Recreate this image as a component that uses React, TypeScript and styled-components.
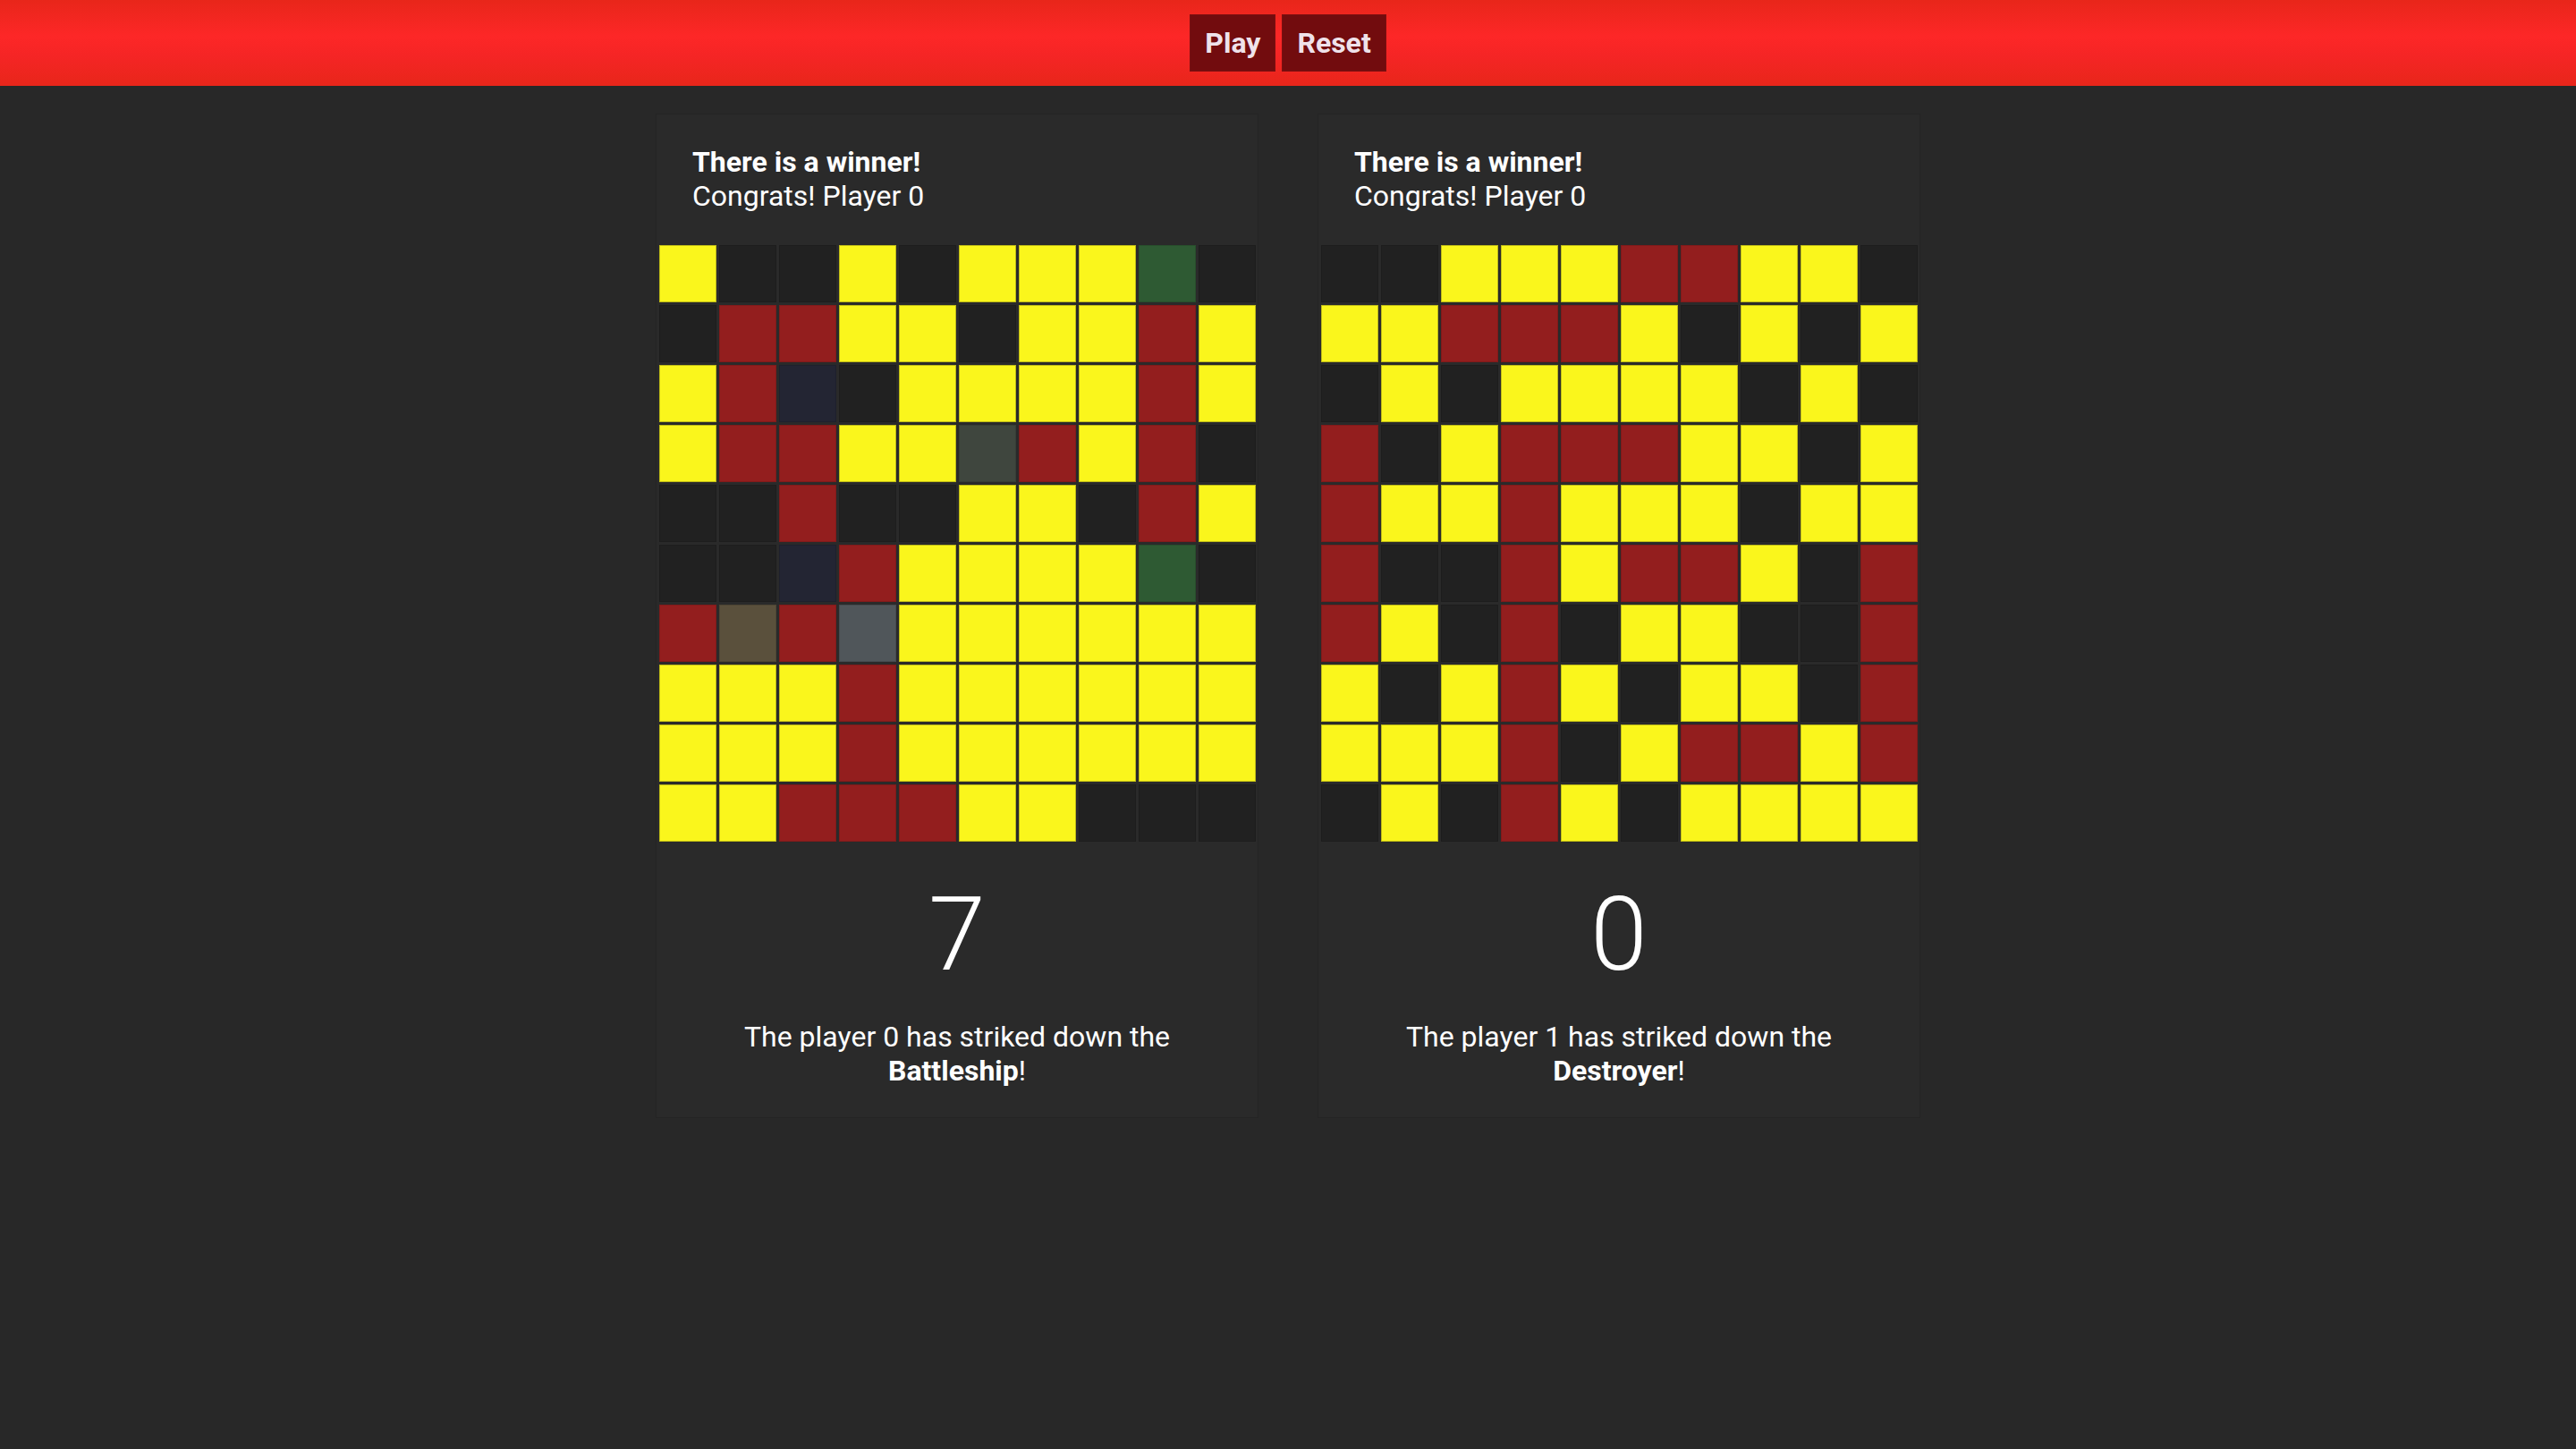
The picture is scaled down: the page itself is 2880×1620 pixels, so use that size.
import styled, { createGlobalStyle } from "styled-components";

const GlobalStyle = createGlobalStyle`
  html, body {
    margin: 0;
    padding: 0;
    background: #282828;
    min-height: 100%;
  }
  body {
    font-family: Roboto, "Liberation Sans", sans-serif;
    color: #ffffff;
  }
`;

// Y yellow (missed shot), K empty, R hit, G/N/O/B/S ship hulls of different types
const palette: Record<string, string> = {
  Y: "#faf61c",
  K: "#212121",
  R: "#931e1e",
  G: "#2e5a33",
  N: "#232533",
  O: "#3f463e",
  B: "#5a503c",
  S: "#50565a",
};

const boards = [
  {
    player: 0,
    score: 7,
    ship: "Battleship",
    rows: [
      "YKKYKYYYGK",
      "KRRYYKYYRY",
      "YRNKYYYYRY",
      "YRRYYORYRK",
      "KKRKKYYKRY",
      "KKNRYYYYGK",
      "RBRSYYYYYY",
      "YYYRYYYYYY",
      "YYYRYYYYYY",
      "YYRRRYYKKK",
    ],
  },
  {
    player: 1,
    score: 0,
    ship: "Destroyer",
    rows: [
      "KKYYYRRYYK",
      "YYRRRYKYKY",
      "KYKYYYYKYK",
      "RKYRRRYYKY",
      "RYYRYYYKYY",
      "RKKRYRRYKR",
      "RYKRKYYKKR",
      "YKYRYKYYKR",
      "YYYRKYRRYR",
      "KYKRYKYYYY",
    ],
  },
];

const TopBar = styled.header`
  height: 96px;
  display: flex;
  align-items: center;
  justify-content: center;
  gap: 7px;
  background: linear-gradient(to bottom, #e8261a 0%, #fd2727 42%, #f52525 65%, #e8261a 100%);
`;

const BarButton = styled.button`
  height: 64px;
  padding: 0 16px;
  border: 1px solid #7c0f10;
  border-radius: 0;
  background: #720c0e;
  color: #efe2ea;
  font-family: Roboto, "Liberation Sans", sans-serif;
  font-weight: 700;
  font-size: 32px;
  cursor: pointer;
`;

const Boards = styled.main`
  display: flex;
  justify-content: center;
  align-items: flex-start;
  gap: 66px;
  padding-top: 31px;
`;

const Card = styled.section`
  width: 674px;
  box-sizing: border-box;
  background: #2a2a2a;
  border: 1px solid #242424;
  padding-bottom: 33px;
`;

const CardHead = styled.div`
  padding: 34px 40px 0;
  font-size: 32px;
`;

const Title = styled.div`
  font-weight: 700;
`;

const Subtitle = styled.div`
  font-weight: 400;
`;

const Grid = styled.div`
  display: grid;
  grid-template-columns: repeat(10, 64px);
  grid-auto-rows: 64px;
  gap: 3px;
  width: max-content;
  margin: 36px auto 0;
`;

const Cell = styled.div<{ $tone: string }>`
  box-sizing: border-box;
  background: ${(p) => palette[p.$tone]};
  border: 1px solid ${(p) => (p.$tone === "Y" ? "rgba(80, 76, 10, 0.35)" : "rgba(0, 0, 0, 0.12)")};
`;

const Score = styled.div`
  margin-top: 35px;
  text-align: center;
  font-size: 115px;
  font-weight: 300;
  line-height: 1.2;
`;

const Message = styled.p`
  margin: 26px 0 0;
  padding: 0 40px;
  text-align: center;
  font-size: 32px;
  line-height: 38px;

  strong {
    font-weight: 700;
  }
`;

const App = () => {
  return (
    <>
      <GlobalStyle />
      <TopBar>
        <BarButton>Play</BarButton>
        <BarButton>Reset</BarButton>
      </TopBar>
      <Boards>
        {boards.map((b) => (
          <Card key={b.player}>
            <CardHead>
              <Title>There is a winner!</Title>
              <Subtitle>Congrats! Player 0</Subtitle>
            </CardHead>
            <Grid>
              {b.rows.flatMap((row, r) =>
                row.split("").map((tone, c) => <Cell key={`${r}-${c}`} $tone={tone} />)
              )}
            </Grid>
            <Score>{b.score}</Score>
            <Message>
              The player {b.player} has striked down the <strong>{b.ship}</strong>!
            </Message>
          </Card>
        ))}
      </Boards>
    </>
  );
};

export default App;
